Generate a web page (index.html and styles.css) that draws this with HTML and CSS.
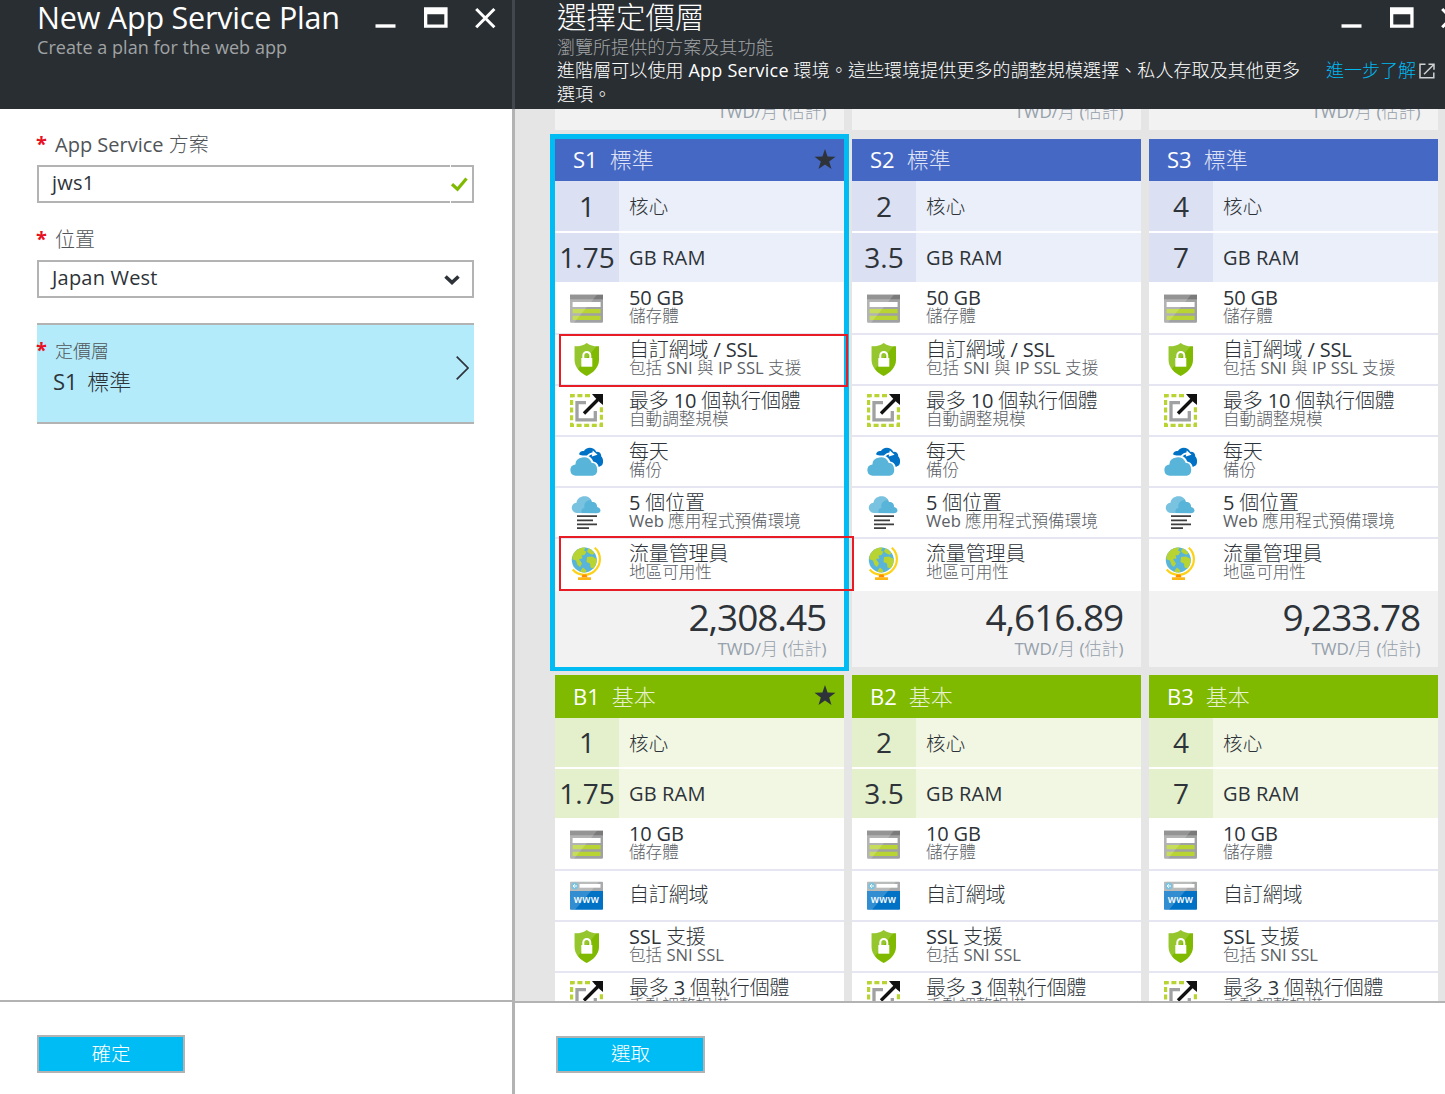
FILE: index.html
```html
<!DOCTYPE html>
<html lang="zh-Hant">
<head>
<meta charset="utf-8">
<title>New App Service Plan</title>
<link rel="stylesheet" href="styles.css">
</head>
<body>
<svg class="sprite" aria-hidden="true">
  <symbol id="i-min" viewBox="0 0 21 34"><path d="M.5 26h20" stroke="#fff" stroke-width="3.4"/></symbol>
  <symbol id="i-max" viewBox="0 0 24 34"><path fill="#fff" fill-rule="evenodd" d="M0 7.300h23.600v20.400H0zM3.300 14.300v10.200h17V14.300z"/></symbol>
  <symbol id="i-close" viewBox="0 0 21 34"><path d="M1.200 9l18.200 18.200M19.400 9L1.200 27.200" stroke="#fff" stroke-width="3"/></symbol>
  <symbol id="i-star" viewBox="0 0 22 22"><path fill="#2d3338" d="M11 0l2.700 7.900 8.300.1-6.600 5.100 2.400 7.900L11 16.300 4.200 21l2.400-7.900L0 8l8.300-.1z"/></symbol>
  <symbol id="i-storage" viewBox="0 0 33 33">
    <path fill="#a0a1a2" d="M0 2.700h33v26.800a1.200 1.200 0 0 1-1.200 1.200H1.200A1.200 1.200 0 0 1 0 29.500z"/>
    <path fill="#7a7a7a" d="M0 2.700h33v4.600H0z"/>
    <path fill="#fff" d="M2.600 10h28v5h-28z"/>
    <path fill="#b8d432" d="M2.600 17h28v4.300h-28zM2.600 23.700h28V28h-28z"/>
    <path fill="#fff" opacity=".2" d="M0 2.700h27L4 30.700H0z"/>
  </symbol>
  <symbol id="i-shield" viewBox="0 0 33 33">
    <path fill="#7fba00" d="M16.700 0c2.700 2.600 7 3.400 12.300 3.300V17c0 7.500-6.200 13.200-12.300 16C10.500 30.200 4.600 24.500 4.600 17V3.300C9.700 3.400 14 2.600 16.700 0z"/>
    <path fill="#fff" opacity=".18" d="M16.700 0c2.300 2.200 5.600 3.100 9.700 3.300L8 26C5.900 23.400 4.600 20.300 4.600 17V3.300C9.700 3.400 14 2.600 16.700 0z"/>
    <path fill="#fff" d="M11.300 15h11v8.700h-11z"/>
    <path fill="none" stroke="#fff" stroke-width="2" d="M13.300 15v-2.500a3.500 3.500 0 0 1 7 0V15"/>
  </symbol>
  <symbol id="i-scale" viewBox="0 0 33 33">
    <path fill="none" stroke="#b8d432" stroke-width="3.200" stroke-dasharray="5 2.600" d="M20 1.600H1.600v29.800h29.800V13"/>
    <path fill="none" stroke="#a0a1a2" stroke-width="3.300" d="M16 8.600H7v17.300h18.300V17"/>
    <path fill="none" stroke="#111" stroke-width="3.300" d="M14 19.500L28 5.500"/>
    <path fill="#111" d="M22 0h11v11l-3-2.500L24.500 3z"/>
  </symbol>
  <symbol id="i-backup" viewBox="0 0 33 33">
    <path fill="#0072c6" d="M9 9.300c.8-2.700 2.900-3.700 5-3.200 1.600-4 9.600-5 12.400.8 2.600-.4 5.200 1.600 4.800 4.600 2 1.300 2.600 6 .8 8.800l-3.200 1.700c-.7-3.300-3.300-5-5.600-5.400-1.500-5-6-6.300-9-6-2-.3-3.700 0-5.200-1.300z"/>
    <path fill="none" stroke="#fff" stroke-width="1.700" d="M17 11.800c2-2.800 4.500-3.800 7.300-3.300"/>
    <path fill="#fff" d="M22.800 5.500l4.700 4.300-5.700 1.700z"/>
    <path fill="#59b4d9" stroke="#fff" stroke-width="1.200" d="M5.700 31.300a6.200 6.200 0 0 1-.8-12.300c0-7.700 13.600-10.700 17.200-1.700 6-.3 8.700 12.300.9 14z"/>
  </symbol>
  <symbol id="i-slots" viewBox="0 0 33 33">
    <path fill="#59b4d9" d="M7 17c-7-.8-6.700-9.700-.5-10.300C8-2 20.500-1.500 22 6c4 0 5.300 2.500 5 5 5 1.300 4.500 6.200-.5 6.200z"/>
    <path fill="#fff" opacity=".2" d="M7 17c-7-.8-6.700-9.700-.5-10.300C8-2 18.500-1.500 21 4c-5 0-7.500 4-6.500 8-2.500 0-4 3-2.500 5z"/>
    <path stroke="#3e3e3e" stroke-width="1.700" d="M7 20.200h20M7 24.300h16M7 28.300h20M7 32.100h12"/>
  </symbol>
  <symbol id="i-globe" viewBox="0 0 33 33">
    <path fill="none" stroke="#fcd116" stroke-width="2.200" d="M24.800.8a15.500 15.500 0 0 1-.4 23.300A15.500 15.500 0 0 1 2.700 22.600"/>
    <path fill="#ff8c00" d="M12.500 27.500h4l1 3h-6z"/>
    <path fill="#fcb714" d="M8 30.300h13V33H8z"/>
    <circle cx="14.300" cy="13" r="12.500" fill="#59b4d9"/>
    <path fill="#b8d432" d="M5 4.700C8.500 1 12 .3 15.500.6l-1.500 3 2.500 1.200-2 3.200-3 .5 1 3-3.500.5 3 4.500-2 3.500-2.500-2-1.500-4.500-3.700-1.200C2.200 9.500 3 7 5 4.700zM18.500 1.300c2 .8 4.500 2.700 6 5l-2 1.500-3.500-1.500-2-2zM17 10l5-.5 4.700 2.500c.3 4-1 7-3.200 9.400l-3-1-.5-4-3.500-1.500zM10 24.600l3-4.100 3.500 3-1 2c-2 .2-3.700 0-5.500-.9z"/>
  </symbol>
  <symbol id="i-www" viewBox="0 0 33 33">
    <path fill="#0072c6" d="M0 12h33v18a.8.8 0 0 1-.8.800H.8A.8.8 0 0 1 0 30z"/>
    <path fill="#a9aaab" d="M.8 2.700h31.400a.8.8 0 0 1 .8.800V12H0V3.500a.8.8 0 0 1 .8-.8z"/>
    <path fill="#fff" d="M9.500 5h21v3.700h-21z"/>
    <circle cx="4.700" cy="7" r="3.500" fill="#59b4d9"/>
    <path fill="none" stroke="#fff" stroke-width="1" d="M7 7H3M4.800 5.200L3 7l1.800 1.800"/>
    <path fill="#fff" opacity=".2" d="M0 2.700h29L5 30.800H0z"/>
    <text class="www" x="16.500" y="24" text-anchor="middle">www</text>
  </symbol>
</svg>

<main class="portal">
  <section class="blade blade-plan">
    <header class="blade-head">
      <div class="title-row"><h1>New App Service Plan</h1>
        <div class="controls"><svg class="c21"><use href="#i-min"/></svg><svg class="c24"><use href="#i-max"/></svg><svg class="c21"><use href="#i-close"/></svg></div>
      </div>
      <p class="subtitle">Create a plan for the web app</p>
    </header>
    <div class="form">
      <label class="label"><b class="req">*</b>App Service 方案</label>
      <div class="field"><span class="value">jws1</span><span class="valid"><svg viewBox="0 0 17 15"><path fill="none" stroke="#7fba00" stroke-width="3.200" d="M1 7.200l5.500 5L15.500 1.500"/></svg></span></div>
      <label class="label label-loc"><b class="req">*</b>位置</label>
      <div class="field"><span class="value">Japan West</span><svg class="caret" viewBox="0 0 16 10"><path fill="none" stroke="#2d3338" stroke-width="3.600" d="M1.500 1.500L8 7.500l6.500-6"/></svg></div>
      <div class="picker">
        <div><div class="picker-label"><b class="req">*</b>定價層</div><div class="picker-value">S1 標準</div></div>
        <svg class="chevron" viewBox="0 0 13 24"><path fill="none" stroke="#2d3338" stroke-width="1.700" d="M.7.700L12 12 .7 23.300"/></svg>
      </div>
    </div>
    <footer class="blade-foot"><button class="action">確定</button></footer>
  </section>

  <section class="blade blade-tiers">
    <header class="blade-head">
      <div class="title-row"><h1>選擇定價層</h1>
        <div class="controls"><svg class="c21"><use href="#i-min"/></svg><svg class="c24"><use href="#i-max"/></svg><svg class="c21"><use href="#i-close"/></svg></div>
      </div>
      <p class="subtitle">瀏覽所提供的方案及其功能</p>
      <div class="notice">
        <p>進階層可以使用 <span class="latin">App Service</span> 環境。這些環境提供更多的調整規模選擇、私人存取及其他更多選項。</p>
        <a class="more">進一步了解<svg viewBox="0 0 16 16"><path fill="none" stroke="#cfd1d2" stroke-width="1.500" d="M6.500 1.200H1v13.600h13.800V9.500M9.500 1.200h5.500v5.500M15 1.200L5 11.200"/></svg></a>
      </div>
    </header>
    <div class="tiers" id="tiers"></div>
    <footer class="blade-foot"><button class="action">選取</button></footer>
  </section>
</main>
<script src="tiers.js"></script>
</body>
</html>
```
FILE: styles.css
```css
* { box-sizing: border-box; }
body {
  margin: 0;
  overflow: hidden;
  background: #fff;
  color: #2d3338;
  font: 20px/1 "Open Sans", "Noto Sans CJK TC Light", "Noto Sans CJK TC", sans-serif;
}
h1, p { margin: 0; font-weight: 400; }
svg { display: block; }
.sprite { position: absolute; width: 0; height: 0; }

.portal { display: flex; width: 1445px; height: 1094px; overflow: hidden; }
.blade { display: flex; flex-direction: column; overflow: hidden; }
.blade-plan { width: 515px; border-right: 3px solid #b3b3b3; overflow: visible; }
.blade-tiers { width: 930px; }

/* Blade header */
.blade-head { flex: none; height: 109px; padding-left: 37px; background: #292e32; color: #fff; }
.blade-plan .blade-head { margin-right: -3px; border-right: 3px solid #41474d; }
.blade-tiers .blade-head { padding-left: 42px; }
.title-row { display: flex; justify-content: space-between; }
h1 { font-size: 30.500px; line-height: 34px; letter-spacing: -.2px; white-space: nowrap; }
.blade-tiers h1 { font-size: 29.500px; line-height: 33px; height: 34px; letter-spacing: 0; }
.controls { display: flex; justify-content: space-between; width: 121px; margin-right: 16px; }
.blade-tiers .controls { margin-right: -17px; }
.c21 { width: 21px; height: 34px; }
.c24 { width: 24px; height: 34px; }
.subtitle { font-size: 18px; line-height: 26px; color: #a0a3a5; letter-spacing: .04px; }
.notice { display: flex; margin-top: -2px; font-size: 18px; line-height: 24px; }
.notice p { width: 769px; letter-spacing: .09px; padding-right: 20px; }
.latin { letter-spacing: .25px; }
.more { display: flex; align-items: center; height: 24px; color: #00b7f0; white-space: nowrap; }
.more svg { width: 16px; height: 16px; margin-left: 3px; margin-top: 2px; }

/* Plan form */
.form { flex: 1; padding: 23px 38px 0 37px; }
.label { display: flex; height: 33px; line-height: 26px; color: #505457; }
.label-loc { margin-top: 24px; }
.req { width: 18px; margin: -1px 0 0 -1px; padding-right: 1px; box-sizing: content-box; font-weight: 700; color: #e81123; }
.field { display: flex; justify-content: space-between; height: 38px; border: 2px solid #b3b3b3; }
.value { padding-left: 13px; line-height: 31px; letter-spacing: .2px; }
.valid { position: relative; width: 22px; }
.valid::before { content: ""; position: absolute; left: 0; top: -2px; width: 1px; height: 38px; background: #fff; }
.valid svg { width: 17px; height: 15px; margin: 10px 0 0 1px; }
.caret { width: 16px; height: 10px; margin: 13px 12px 0 0; }
.picker {
  display: flex; justify-content: space-between;
  height: 101px; margin-top: 25px;
  background: #b3ebfb; border: solid #b3b3b3; border-width: 2px 0;
}
.picker-label { display: flex; margin-top: 13px; font-size: 18px; line-height: 26px; color: #505457; }
.picker-label .req { font-size: 20px; }
.picker-value { padding-left: 16px; font-size: 22px; line-height: 34px; word-spacing: 4px; }
.chevron { width: 13px; height: 24px; margin: 31px 5px 0 0; }

.blade-foot { flex: none; height: 94px; padding: 33px 0 0 37px; border-top: 2px solid #b3b3b3; background: #fff; }
.blade-tiers .blade-foot { height: 93px; padding-left: 41px; }
.action {
  display: block; width: 148px; height: 38px; padding: 0;
  border: 2px solid #b3b3b3; background: #00bcf5; color: #fff;
  font: inherit; font-size: 19.500px; line-height: 34px;
}
.blade-tiers .action { width: 149px; height: 37px; line-height: 31px; padding-bottom: 2px; }

/* Pricing tiers */
.tiers {
  flex: 1; min-height: 0; overflow: hidden; background: #e5e5e5;
  display: grid; grid-template-columns: repeat(3, 289px); grid-auto-rows: max-content;
  column-gap: 8px; padding-left: 40px; align-content: start;
}
.tier { position: relative; background: #fff; }
.tier.standard { height: 528px; margin: 9px 0 8px; }
.tier.peek { height: 21px; overflow: hidden; background: #f2f2f2; }
.tier.peek .unit { margin-top: -9px; padding-right: 17.500px; }
.tier.selected::after {
  content: ""; position: absolute; inset: -5px -5px -4px;
  border: 5px solid #00bcf2; border-bottom-width: 4px;
}
.tier-head { display: flex; height: 42px; padding: 0 8px 0 18px; font-size: 22px; line-height: 40px; color: #fff; }
.tier-head .kind { margin-left: 12px; opacity: .82; }
.tier-head svg { width: 22px; height: 21px; margin: 10px 0 0 auto; }
.standard .tier-head { background: #4668c5; }
.basic .tier-head { height: 43px; line-height: 42px; background: #7fba00; }
.spec { display: flex; height: 49px; line-height: 49px; margin-bottom: 2px; }
.spec + .spec { margin-bottom: 0; }
.standard .spec:nth-child(2) { height: 50px; line-height: 50px; }
.spec b { width: 64px; font-size: 28px; font-weight: 400; text-align: center; }
.spec span { flex: 1; padding-left: 10px; letter-spacing: .15px; }
.spec:nth-child(2) span { padding-top: 1px; font-size: 19.500px; }
.standard .spec b { background: #dbe0f3; }
.standard .spec span { background: #ebeff9; }
.basic .spec b { background: #e4f0cc; }
.basic .spec span { background: #f2f7e4; }
.feature { display: flex; align-items: center; height: 51px; border-top: 2px solid #e6e6f3; }
.spec + .feature { border-top: 0; }
.feature svg { width: 33px; height: 33px; margin: 0 26px 0 15px; flex: none; }
.spec + .feature svg { margin-top: 2px; }
.feature div { padding-bottom: 3px; white-space: nowrap; }
.feature p { line-height: 19px; letter-spacing: -.15px; }
.feature small { display: block; font-size: 16.600px; line-height: 17px; color: #5b6065; }
.feature p:only-child { padding-top: 1px; }
.www { font: 600 10px "Open Sans", sans-serif; letter-spacing: .3px; fill: #fff; }
.price { height: 76px; margin-top: 3px; padding-top: 6px; background: #f2f2f2; text-align: right; }
.price .unit { padding-right: 17.500px; }
.amount { padding-right: 18px; font-size: 37px; line-height: 40px; letter-spacing: -1.100px; }
.unit { font-size: 17px; line-height: 24px; color: #95a0aa; text-align: right; }

/* Callout boxes around highlighted features */
.mark { position: absolute; z-index: 2; left: 4px; border: 2px solid #e81c24; }
.mark-ssl { top: 195px; width: 289px; height: 53px; }
.mark-traffic { top: 397px; width: 295px; height: 55px; }
```
FILE: tiers.js
```js
const sizes = [
  { n: 1, cores: 1, ram: "1.75", price: "2,308.45" },
  { n: 2, cores: 2, ram: "3.5", price: "4,616.89" },
  { n: 3, cores: 4, ram: "7", price: "9,233.78" }
];

const standard = [
  ["storage", "50 GB", "儲存體"],
  ["shield", "自訂網域 / SSL", "包括 SNI 與 IP SSL 支援"],
  ["scale", "最多 10 個執行個體", "自動調整規模"],
  ["backup", "每天", "備份"],
  ["slots", "5 個位置", "Web 應用程式預備環境"],
  ["globe", "流量管理員", "地區可用性"]
];

const basic = [
  ["storage", "10 GB", "儲存體"],
  ["www", "自訂網域", ""],
  ["shield", "SSL 支援", "包括 SNI SSL"],
  ["scale", "最多 3 個執行個體", "手動調整規模"]
];

const unit = '<div class="unit">TWD/月 (估計)</div>';

const feature = ([icon, title, note]) =>
  `<div class="feature"><svg><use href="#i-${icon}"/></svg><div><p>${title}</p>${note ? `<small>${note}</small>` : ""}</div></div>`;

const head = (code, kind, size) =>
  `<div class="tier-head"><span>${code}${size.n}</span><span class="kind">${kind}</span>${size.n === 1 ? '<svg><use href="#i-star"/></svg>' : ""}</div>
   <div class="spec"><b>${size.cores}</b><span>核心</span></div>
   <div class="spec"><b>${size.ram}</b><span>GB RAM</span></div>`;

const marks = '<i class="mark mark-ssl"></i><i class="mark mark-traffic"></i>';

document.getElementById("tiers").innerHTML =
  sizes.map(() => `<article class="tier peek">${unit}</article>`).join("") +
  sizes.map(s => `<article class="tier standard${s.n === 1 ? " selected" : ""}">${head("S", "標準", s)}${standard.map(feature).join("")}
    <div class="price"><div class="amount">${s.price}</div>${unit}</div>${s.n === 1 ? marks : ""}</article>`).join("") +
  sizes.map(s => `<article class="tier basic">${head("B", "基本", s)}${basic.map(feature).join("")}</article>`).join("");
```
